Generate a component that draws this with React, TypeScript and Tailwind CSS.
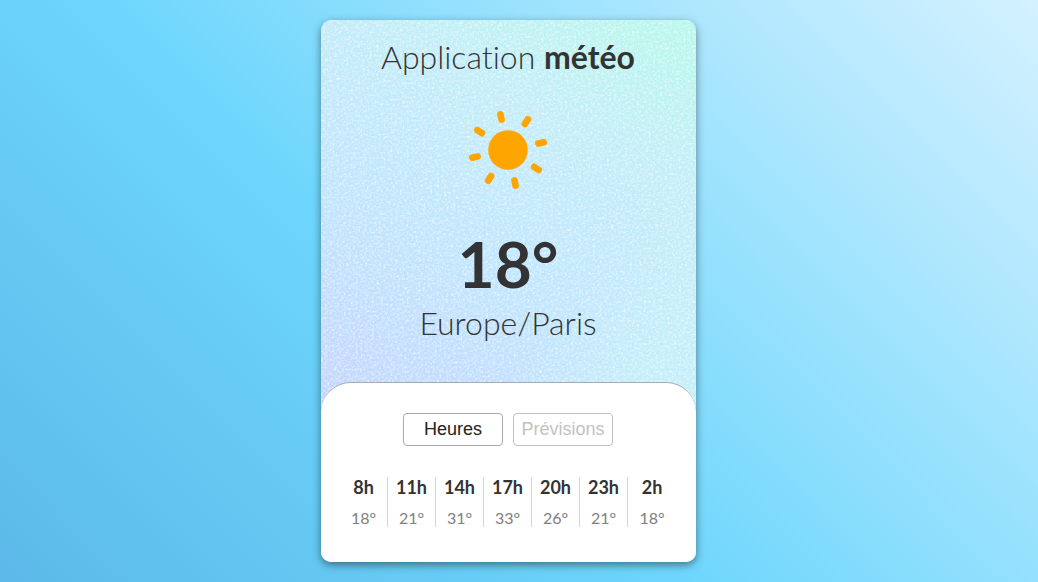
import { useState } from "react";

const hours = [
  { hour: "8h", temp: "18°" },
  { hour: "11h", temp: "21°" },
  { hour: "14h", temp: "31°" },
  { hour: "17h", temp: "33°" },
  { hour: "20h", temp: "26°" },
  { hour: "23h", temp: "21°" },
  { hour: "2h", temp: "18°" },
];

const rays = [-12, 33, 78, 123, 168, 213, 258, 303];

function Grain() {
  return (
    <svg className="pointer-events-none absolute inset-0 h-full w-full" aria-hidden="true">
      <filter id="grain" x="0" y="0" width="100%" height="100%">
        <feTurbulence type="fractalNoise" baseFrequency="0.43" numOctaves="4" seed="11" />
        <feColorMatrix values="0 0 0 0 1  0 0 0 0 1  0 0 0 0 1  1.8 1.4 0 0 -1.4" />
      </filter>
      <rect width="100%" height="100%" filter="url(#grain)" opacity="0.6" />
    </svg>
  );
}

function Sun() {
  return (
    <svg className="size-20" viewBox="-40 -40 80 80" fill="#ffa500" role="img" aria-label="Soleil">
      <circle r="19.8" />
      {rays.map((angle) => (
        <rect key={angle} x="-3.3" y="-39.8" width="6.6" height="12" rx="3" transform={`rotate(${angle})`} />
      ))}
    </svg>
  );
}

function Tab({ label, active, onClick }: { label: string; active: boolean; onClick: () => void }) {
  return (
    <button
      type="button"
      onClick={onClick}
      aria-pressed={active}
      className={
        active
          ? "h-[33px] w-[100px] rounded border border-[#aaaaaa] pb-0.5 font-['Liberation_Sans',Arial,sans-serif] text-lg leading-none text-[#222222]"
          : "h-[33px] w-[100px] rounded border border-[#c0c0c0] pb-0.5 font-['Liberation_Sans',Arial,sans-serif] text-lg leading-none text-[#c2c2c2]"
      }
    >
      {label}
    </button>
  );
}

export default function App() {
  const [tab, setTab] = useState("Heures");

  return (
    <main className="flex min-h-screen items-start justify-center bg-[linear-gradient(45deg,#5cb9e9_0%,#6dd6fc_42%,#d4f1ff_100%)] py-5 pr-[21px] font-[Lato,sans-serif] text-[#333333]">
      <section className="w-full max-w-[375px] overflow-hidden rounded-[10px] bg-[linear-gradient(30deg,#c3d8ff_26%,#c0e5fe_50%,#c3edf9_76%,#b9f7ed_96%)] shadow-[0_3px_8px_rgba(0,0,0,0.45)]">
        <div className="relative -mb-[30px] bg-[linear-gradient(125deg,transparent_68%,#c4eef9_88%)] pr-5 pb-[30px] pl-[19px]">
          <Grain />
          <div className="relative flex flex-col items-center">
            <h1 className="pt-[19px] text-[32px] leading-9 font-light [font-variant-ligatures:none]">
              Application <strong className="font-bold">météo</strong>
            </h1>
            <div className="mt-[35px]">
              <Sun />
            </div>
            <p className="mt-[34px] text-[64px] leading-[80px] font-bold">18°</p>
            <p className="mt-px text-[32px] leading-9 font-light">Europe/Paris</p>
            <div className="h-[41px]" />
          </div>
        </div>
        <div className="relative rounded-t-[30px] border-t border-[#aaaaaa] bg-white pt-[30px] pr-5 pb-[35px] pl-[19px]">
          <div className="flex justify-center gap-2.5">
            <Tab label="Heures" active={tab === "Heures"} onClick={() => setTab("Heures")} />
            <Tab label="Prévisions" active={tab === "Prévisions"} onClick={() => setTab("Prévisions")} />
          </div>
          <table className="mt-[31px] w-full table-fixed border-separate border-spacing-0 text-center">
            <thead>
              <tr>
                {hours.map((h) => (
                  <th key={h.hour} scope="col" className="border-r border-[#d3d3d3] p-0 text-lg leading-5 font-bold last:border-r-0">
                    {h.hour}
                  </th>
                ))}
              </tr>
            </thead>
            <tbody>
              <tr>
                {hours.map((h) => (
                  <td key={h.hour} className="border-r border-[#d3d3d3] p-0 pt-3 text-base leading-[18px] text-[#808080] last:border-r-0">
                    {h.temp}
                  </td>
                ))}
              </tr>
            </tbody>
          </table>
        </div>
      </section>
    </main>
  );
}
